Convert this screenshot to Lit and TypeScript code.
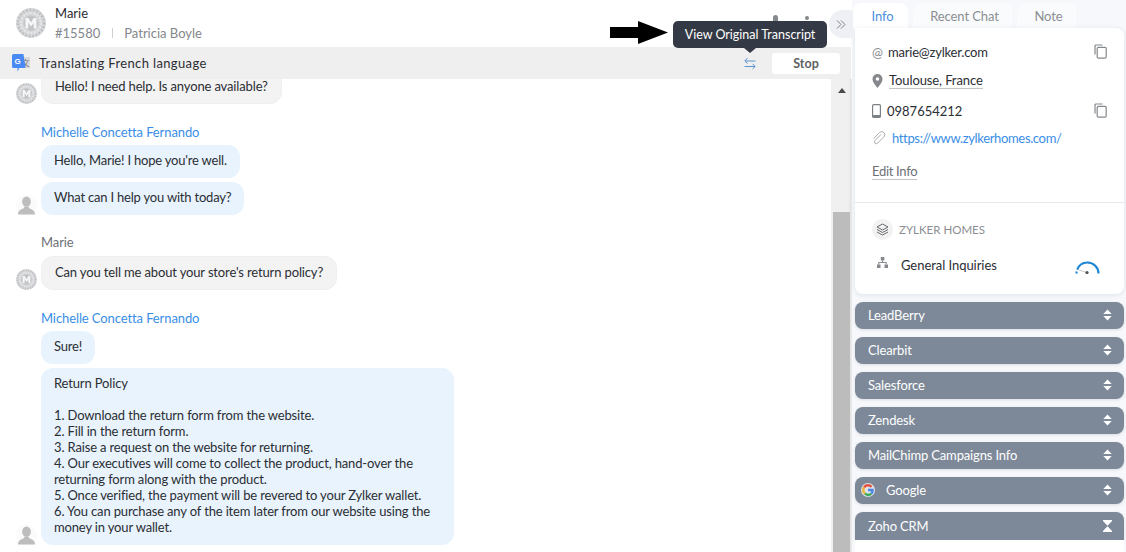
import { LitElement, html, css } from "lit";
import { customElement } from "lit/decorators.js";

const mAvatar = (size: number) => html`<svg class="mav" width=${size} height=${size} viewBox="0 0 30 30">
  <circle cx="15" cy="15" r="15" fill="#d6d7d9"/>
  <circle cx="15" cy="15" r="13" fill="none" stroke="#bcbdc0" stroke-width="2.500" stroke-dasharray="1.500 2"/>
  <circle cx="15" cy="15" r="10" fill="none" stroke="#e6e7e9" stroke-width="2" stroke-dasharray="2 1.500"/>
  <circle cx="15" cy="15" r="7.500" fill="#c3c4c7"/>
  <path d="M9.500 20.500V10h2.800L15 14.500l2.700-4.500h2.800v10.500h-2.800v-5.500L15 18.500l-2.700-4v6z" fill="#f6f6f7"/>
</svg>`;

const person = html`<svg class="person" width="22" height="22" viewBox="0 0 22 22">
  <circle cx="11" cy="11" r="11" fill="#fbfbfb"/>
  <ellipse cx="11" cy="7.500" rx="4.600" ry="5.400" fill="#bdbdbd"/>
  <path d="M2 21c0-4 3.500-5.500 6-6.500l1-2h4l1 2c2.500 1 6 2.500 6 6.500z" fill="#bdbdbd"/>
</svg>`;

const copy = html`<svg class="copy" width="13" height="15" viewBox="0 0 13 15" fill="none" stroke="#85888c" stroke-width="1.200">
  <path d="M1 10.500V2a1 1 0 0 1 1-1h6.500"/><rect x="3.200" y="3.400" width="9" height="10.800" rx="1.200"/>
</svg>`;

const updown = html`<svg width="9" height="12" viewBox="0 0 9 12" fill="#fff"><path d="M4.500 0.500 8.700 5H.3zM.3 7h8.400l-4.200 4.500z"/></svg>`;
const hourglass = html`<svg width="9" height="12" viewBox="0 0 9 12" fill="#fff"><path d="M0 0h9v1L4.500 5.700 0 1zM4.500 6.300 9 11v1H0v-1z"/></svg>`;

@customElement("app-root")
export class AppRoot extends LitElement {
  static styles = css`
    :host { display: block; width: 1126px; height: 552px; overflow: hidden; position: relative;
      font-family: "Lato", "Liberation Sans", sans-serif; font-size: 13px; color: #2b2e33; background: #f6f8fb; }
    * { box-sizing: border-box; }
    .app { display: flex; height: 552px; }
    .main { width: 852px; display: flex; flex-direction: column; background: #fff; flex: none; }
    .head { height: 47px; padding: 6px 0 0 16px; display: flex; gap: 9px; flex: none; }
    .head .av { margin-top: 2px; }
    .mav { display: block; }
    .who { display: flex; flex-direction: column; gap: 6px; }
    .name { font-size: 13px; line-height: 13px; margin-top: 1px; }
    .sub { color: #84878b; display: flex; line-height: 14px; align-items: center; }
    .sep { width: 1px; height: 10px; background: #cfcfcf; margin: 0 11px 0 12px; }
    .bar { height: 32px; background: #efefef; display: flex; align-items: center; padding-left: 12px; flex: none; width: 851px; position: relative; z-index: 1; }
    .bar .t { margin-left: 9px; flex: 1; letter-spacing: .37px; }
    .swap { margin-right: 16px; display: block; }
    .stop { width: 68px; height: 21px; background: #fff; border-radius: 3px; font-weight: 700; color: #5e6165; font-size: 12.500px; display: flex; align-items: center; justify-content: center; margin-right: 11px; }
    .chat { flex: 1; display: flex; min-height: 0; overflow: hidden; }
    .msgs { width: 831px; padding-left: 16px; overflow: hidden; flex: none; }
    .scroll { width: 21px; background: linear-gradient(90deg, #f0f0f0 0 82%, #e2e2e2 96%, #f2f2f2 100%); padding-top: 9px; display: flex; flex-direction: column; align-items: center; flex: none; }
    .scroll i { display: block; width: 0; height: 0; border: 4.500px solid transparent; border-top: 0; border-bottom: 5px solid #4a4a4a; }
    .thumb { width: 17px; background: #bcbcbc; margin-top: 119px; flex: 1; }
    .group { display: flex; gap: 4px; align-items: flex-end; }
    .group.first { margin-top: -9px; }
    .group .av { width: 21px; height: 21px; flex: none; display: flex; }
    .stack { display: flex; flex-direction: column; gap: 4px; align-items: flex-start; }
    .bub { border-radius: 12px; padding: 7px 13px 10px; line-height: 16px; letter-spacing: -.2px; }
    .bub.in { background: #f3f3f3; border: 1px solid #efefef; padding: 7px 13px 9px; letter-spacing: -.14px; }
    .bub.out { background: #e8f3fd; }
    .bub.policy { width: 413px; letter-spacing: -.15px; }
    .policy div { min-height: 16px; }
    .label { margin: 20px 0 5px 25px; line-height: 16px; letter-spacing: -.1px; }
    .label.agent { color: #3a8ee6; }
    .label.cust { color: #6d7075; margin: 19px 0 6px 25px; }
    .person { display: block; }
    .side { flex: 1; padding: 3px 2px 0 3px; display: flex; flex-direction: column; min-width: 0; }
    .tabs { display: flex; gap: 5px; height: 25px; flex: none; margin-left: -2px; }
    .tab { display: flex; align-items: center; justify-content: center; background: #fafbfc; border-radius: 8px 8px 0 0; color: #8b8e92; height: 25px; letter-spacing: -.1px; padding-left: 4px; }
    .tab.on { background: #fff; color: #4a90dd; width: 55px; }
    .tab.rc { width: 99px; }
    .tab.nt { width: 59px; }
    .card { background: #fff; border-radius: 0 8px 8px 8px; height: 266px; flex: none; box-shadow: 0 1px 5px rgba(60,70,90,.12); display: flex; flex-direction: column; }
    .info { height: 175px; border-bottom: 1px solid #e8e8e8; padding: 15px 17px 0 17px; display: flex; flex-direction: column; flex: none; }
    .row { display: flex; align-items: center; height: 17px; }
    .row .ic { width: 16px; display: flex; flex: none; color: #8a8d91; }
    .row .txt { flex: 1; }
    .u { border-bottom: 1px solid #c4c4c4; line-height: 15px; display: inline-block; }
    .link { color: #3a8ee6; letter-spacing: -.35px; margin-left: 4px; }
    .phone { margin-left: -1px; }
    .mail { letter-spacing: -.2px; }
    .place { letter-spacing: -.1px; margin-left: 1px; }
    .row.r1 { margin-bottom: 12px; }
    .row.r2 { margin-bottom: 13px; }
    .row.r3 { margin-bottom: 10px; }
    .row.r4 { margin-bottom: 17px; }
    .edit { color: #6d7075; letter-spacing: -.3px; }
    .org { padding: 16px 0 0 17px; flex: 1; }
    .brand { display: flex; align-items: center; gap: 6px; color: #8b8e92; font-size: 11.500px; }
    .disc { width: 21px; height: 21px; border-radius: 50%; background: #f2f2f2; display: flex; align-items: center; justify-content: center; }
    .dept { display: flex; align-items: flex-start; margin-top: 14px; padding-left: 5px; }
    .deptic { margin-top: 3px; display: block; }
    .dept .d { margin-left: 13px; flex: 1; line-height: 16px; padding-top: 3px; letter-spacing: -.05px; }
    .gauge { margin: 7px 24px 0 0; display: block; }
    .acc { margin-top: 8px; height: 27px; border-radius: 8px; background: #7d8998; color: #fff; display: flex; align-items: center; justify-content: space-between; padding: 0 12px 1px 13px; flex: none; box-shadow: 0 1px 3px rgba(60,70,90,.15); letter-spacing: -.15px; }
    .acc .l { display: flex; align-items: center; }
    .acc.g { padding-left: 6px; }
    .logo { margin-right: 11px; }
    .acc.open { border-radius: 8px 8px 0 0; height: 28px; }
    .rest { flex: 1; background: #fff; }
    .tip { position: absolute; left: 673px; top: 21px; width: 154px; height: 27px; background: #343a45; color: #fff; border-radius: 5px; display: flex; align-items: center; justify-content: center; font-size: 12.500px; z-index: 5; }
    .tip::after { content: ""; position: absolute; left: 71px; top: 27px; border: 6px solid transparent; border-bottom: 0; border-top: 5px solid #343a45; }
    .arrow { position: absolute; left: 610px; top: 21px; z-index: 5; display: block; }
    .collapse { position: absolute; left: 829px; top: 10px; width: 24px; height: 28px; border-radius: 14px 0 0 14px; background: #eef0f5; display: flex; align-items: center; justify-content: center; z-index: 6; }
    .behind { position: absolute; left: 773px; top: 15px; width: 5px; height: 6px; background: #85888c; border-radius: 3px 3px 0 0; }
    .behind.dot { left: 805px; top: 16px; width: 4px; height: 4px; border-radius: 50%; }
  `;

  render() {
    return html`<div class="app">
      <div class="main">
        <div class="head">
          <div class="av">${mAvatar(30)}</div>
          <div class="who">
            <div class="name">Marie</div>
            <div class="sub"><span>#15580</span><span class="sep"></span><span>Patricia Boyle</span></div>
          </div>
        </div>
        <div class="bar">
          <svg width="18" height="18" viewBox="0 0 18 18">
            <rect x="7" y="3" width="11" height="11" fill="#d9d9d9"/>
            <text x="9.500" y="12" font-size="8" fill="#777" font-family="Noto Sans CJK SC">文</text>
            <path d="M1.500 0h10l2 14H7l-.500 2-1 1.500V14H1.500A1.500 1.500 0 0 1 0 12.500v-11A1.500 1.500 0 0 1 1.500 0z" fill="#4a8af4"/>
            <text x="2.500" y="10" font-size="8" font-weight="700" fill="#fff" font-family="Liberation Sans">G</text>
          </svg>
          <span class="t">Translating French language</span>
          <svg class="swap" width="12" height="13" viewBox="0 0 12 13" fill="none" stroke="#5b94d3" stroke-width="1">
            <path d="M11.500 4H1M3.500 1 .8 4l2.700 2.500M.5 9.500H11M8.500 6.800l2.700 2.700L8.500 12"/>
          </svg>
          <div class="stop">Stop</div>
        </div>
        <div class="chat">
          <div class="msgs">
            <div class="group first">
              <div class="av">${mAvatar(21)}</div>
              <div class="stack"><div class="bub in">Hello! I need help. Is anyone available?</div></div>
            </div>
            <div class="label agent">Michelle Concetta Fernando</div>
            <div class="group">
              <div class="av">${person}</div>
              <div class="stack">
                <div class="bub out">Hello, Marie! I hope you're well.</div>
                <div class="bub out">What can I help you with today?</div>
              </div>
            </div>
            <div class="label cust">Marie</div>
            <div class="group">
              <div class="av">${mAvatar(21)}</div>
              <div class="stack"><div class="bub in">Can you tell me about your store's return policy?</div></div>
            </div>
            <div class="label agent">Michelle Concetta Fernando</div>
            <div class="group">
              <div class="av">${person}</div>
              <div class="stack">
                <div class="bub out">Sure!</div>
                <div class="bub out policy">
                  <div>Return Policy</div><div></div>
                  <div>1. Download the return form from the website.</div>
                  <div>2. Fill in the return form.</div>
                  <div>3. Raise a request on the website for returning.</div>
                  <div>4. Our executives will come to collect the product, hand-over the returning form along with the product.</div>
                  <div>5. Once verified, the payment will be revered to your Zylker wallet.</div>
                  <div>6. You can purchase any of the item later from our website using the money in your wallet.</div>
                </div>
              </div>
            </div>
          </div>
          <div class="scroll"><i></i><div class="thumb"></div></div>
        </div>
      </div>
      <div class="side">
        <div class="tabs">
          <div class="tab on">Info</div><div class="tab rc">Recent Chat</div><div class="tab nt">Note</div>
        </div>
        <div class="card">
          <div class="info">
            <div class="row r1"><span class="ic">@</span><span class="txt mail">marie@zylker.com</span>${copy}</div>
            <div class="row r2"><span class="ic"><svg width="11" height="14" viewBox="0 0 11 14"><path fill-rule="evenodd" d="M5.500 0a5 5 0 0 1 5 5c0 3.500-5 9-5 9s-5-5.500-5-9a5 5 0 0 1 5-5zm0 3.200a1.800 1.800 0 1 0 0 3.600 1.800 1.800 0 0 0 0-3.600z" fill="#85888c"/></svg></span><span class="txt"><span class="u place">Toulouse, France</span></span></div>
            <div class="row r3"><span class="ic"><svg width="9" height="14" viewBox="0 0 9 14" fill="none"><rect x=".6" y=".6" width="7.800" height="12.800" rx="1.200" stroke="#7d8085" stroke-width="1.200"/><rect x=".6" y="11" width="7.800" height="2.400" fill="#7d8085"/></svg></span><span class="txt phone">0987654212</span>${copy}</div>
            <div class="row r4"><span class="ic"><svg width="14" height="14" viewBox="0 0 14 14" fill="none" stroke="#a9abae" stroke-width="1"><path d="M9 3.500 3 9.500a1.800 1.800 0 0 0 2.600 2.600l6.300-6.300a3 3 0 0 0-4.300-4.300L1.500 7.600"/></svg></span><span class="txt link">https://www.zylkerhomes.com/</span></div>
            <div class="row"><span class="edit u">Edit Info</span></div>
          </div>
          <div class="org">
            <div class="brand"><span class="disc"><svg width="13" height="13" viewBox="0 0 13 13" fill="none" stroke="#66696d" stroke-width="1"><path d="M6.500 1 12 4 6.500 7 1 4zM1 6.500l5.500 3 5.500-3M1 9l5.500 3L12 9"/></svg></span>ZYLKER HOMES</div>
            <div class="dept">
              <svg class="deptic" width="11" height="11" viewBox="0 0 11 11" fill="#85888c"><rect x="3.800" y="0" width="3.500" height="3.500"/><rect x="0" y="7.500" width="3.500" height="3.500"/><rect x="7.500" y="7.500" width="3.500" height="3.500"/><path d="M5 3.500h1v1.500h3.700v2.500h-1V6H2.300v1.500h-1V5H5z"/></svg>
              <span class="d">General Inquiries</span>
              <svg class="gauge" width="25" height="13" viewBox="0 0 25 13" fill="none"><path d="M1.500 12.500A11 11 0 0 1 23.500 12.500" stroke="#1f86d6" stroke-width="2.200" stroke-dasharray="2 2 40"/><path d="M4 9l7 2.300" stroke="#ccc"/><circle cx="12" cy="11.500" r="1.600" fill="#555"/></svg>
            </div>
          </div>
        </div>
        <div class="acc"><span>LeadBerry</span>${updown}</div>
        <div class="acc"><span>Clearbit</span>${updown}</div>
        <div class="acc"><span>Salesforce</span>${updown}</div>
        <div class="acc"><span>Zendesk</span>${updown}</div>
        <div class="acc"><span>MailChimp Campaigns Info</span>${updown}</div>
        <div class="acc g"><span class="l"><svg class="logo" width="14" height="14" viewBox="0 0 14 14" fill="none" stroke-width="2.500"><circle cx="7" cy="7" r="7" fill="#dfe3e8" stroke="none"/><path d="M3 4.500A4.500 4.500 0 0 1 10.500 4" stroke="#e0523f"/><path d="M3 4.500a4.500 4.500 0 0 0 1 6" stroke="#e9b83a"/><path d="M4 10.500a4.500 4.500 0 0 0 6.500 0" stroke="#3aa857"/><path d="M10.500 10.500A4.500 4.500 0 0 0 11.500 7H7" stroke="#4a86e8"/></svg>Google</span>${updown}</div>
        <div class="acc open"><span>Zoho CRM</span>${hourglass}</div>
        <div class="rest"></div>
      </div>
    </div>
    <span class="behind"></span>
    <span class="behind dot"></span>
    <svg class="arrow" width="58" height="23" viewBox="0 0 58 23"><path d="M0 6h28V0l30 11.500L28 23v-6H0z" fill="#000"/></svg>
    <div class="tip">View Original Transcript</div>
    <div class="collapse"><svg width="10" height="9" viewBox="0 0 10 9" fill="none" stroke="#7a7f88" stroke-width="1"><path d="M1 .5l4 4-4 4M5 .5l4 4-4 4"/></svg></div>`;
  }
}
